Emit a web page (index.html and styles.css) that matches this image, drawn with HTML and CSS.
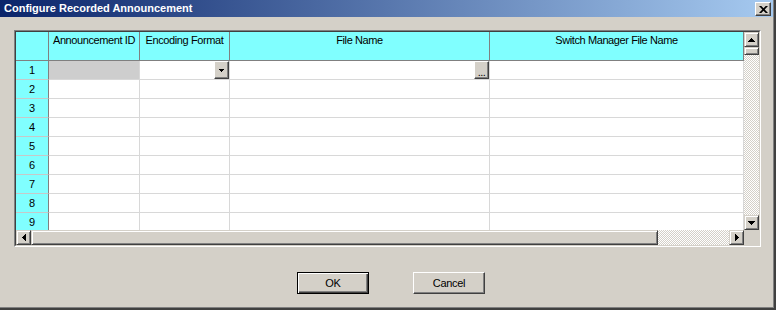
FILE: index.html
```html
<!DOCTYPE html>
<html>
<head>
	<title>Configure Recorded Announcement</title>
	<meta charset="UTF-8">
	<link rel="stylesheet" href="styles.css">
</head>
<body>
	<div class="frame">
		<div class="window">
			<header class="titlebar">
				<span class="title">Configure Recorded Announcement</span>
				<button class="close" type="button">
					<svg width="9" height="7" viewBox="0 0 9 7"><path d="M0 0h2.3l2.2 2.3L6.7 0H9L5.7 3.5 9 7H6.7L4.5 4.7 2.3 7H0l3.3-3.5z"/></svg>
				</button>
			</header>
			<div class="client">
				<div class="grid">
					<div class="grid-inner">
						<div class="viewport">
							<div class="cells">
								<div class="hcell"></div>
								<div class="hcell">Announcement ID</div>
								<div class="hcell">Encoding Format</div>
								<div class="hcell">File Name</div>
								<div class="hcell">Switch Manager File Name</div>

								<div class="rhead">1</div>
								<div class="cell locked"></div>
								<div class="cell"><span class="cell-btn"><svg width="5" height="3" viewBox="0 0 5 3"><path d="M0 0h5v1H4v1H3v1H2V2H1V1H0z"/></svg></span></div>
								<div class="cell"><span class="cell-btn dots">...</span></div>
								<div class="cell"></div>

								<div class="rhead">2</div><div class="cell"></div><div class="cell"></div><div class="cell"></div><div class="cell"></div>
								<div class="rhead">3</div><div class="cell"></div><div class="cell"></div><div class="cell"></div><div class="cell"></div>
								<div class="rhead">4</div><div class="cell"></div><div class="cell"></div><div class="cell"></div><div class="cell"></div>
								<div class="rhead">5</div><div class="cell"></div><div class="cell"></div><div class="cell"></div><div class="cell"></div>
								<div class="rhead">6</div><div class="cell"></div><div class="cell"></div><div class="cell"></div><div class="cell"></div>
								<div class="rhead">7</div><div class="cell"></div><div class="cell"></div><div class="cell"></div><div class="cell"></div>
								<div class="rhead">8</div><div class="cell"></div><div class="cell"></div><div class="cell"></div><div class="cell"></div>
								<div class="rhead">9</div><div class="cell"></div><div class="cell"></div><div class="cell"></div><div class="cell"></div>
							</div>
						</div>
						<div class="vscroll">
							<div class="sb-btn"><svg width="7" height="4" viewBox="0 0 7 4"><path d="M3 0h1v1h1v1h1v1h1v1H0V3h1V2h1V1h1z"/></svg></div>
							<div class="sb-thumb v"></div>
							<div class="sb-track"></div>
							<div class="sb-btn"><svg width="7" height="4" viewBox="0 0 7 4"><path d="M0 0h7v1H6v1H5v1H4v1H3V3H2V2H1V1H0z"/></svg></div>
						</div>
						<div class="hscroll">
							<div class="sb-btn"><svg width="4" height="7" viewBox="0 0 4 7"><path d="M3 0h1v7H3V6H2V5H1V4H0V3h1V2h1V1h1z"/></svg></div>
							<div class="sb-thumb h"></div>
							<div class="sb-track"></div>
							<div class="sb-btn"><svg width="4" height="7" viewBox="0 0 4 7"><path d="M0 0h1v1h1v1h1v1h1v1H3v1H2v1H1v1H0z"/></svg></div>
						</div>
						<div class="sb-corner"></div>
					</div>
				</div>
				<div class="actions">
					<button class="btn default" type="button">OK</button>
					<button class="btn" type="button">Cancel</button>
				</div>
			</div>
		</div>
	</div>
</body>
</html>
```

FILE: styles.css
```css
body {
	margin: 0;
	padding: 0;
	background-color: #d4d0c8;
	font-family: "Liberation Sans", Arial, sans-serif;
	font-size: 11px;
	color: #000;
}
.frame {
	width: 776px;
	height: 310px;
	box-sizing: border-box;
	border-right: 2px solid #404040;
	border-bottom: 2px solid #404040;
}
.window {
	height: 100%;
	box-sizing: border-box;
	border-right: 1px solid #808080;
	border-bottom: 1px solid #808080;
	background-color: #d4d0c8;
}
.titlebar {
	height: 17px;
	display: flex;
	align-items: flex-start;
	justify-content: space-between;
	padding: 0 2px 0 4px;
	background: linear-gradient(to right, #0a246a, #a6caf0);
}
.title {
	color: #fff;
	font-weight: bold;
	line-height: 17px;
}
.close {
	width: 16px;
	height: 14px;
	margin-top: 2px;
	padding: 0;
	display: flex;
	align-items: center;
	justify-content: center;
	background-color: #d4d0c8;
	border: 1px solid;
	border-color: #fff #404040 #404040 #fff;
	box-shadow: inset -1px -1px #808080;
}
.client {
	padding: 13px 0 0 14px;
}

/* sunken grid box */
.grid {
	width: 747px;
	box-sizing: border-box;
	border: 1px solid;
	border-color: #808080 #fff #fff #808080;
}
.grid-inner {
	display: grid;
	grid-template-columns: 728px 15px;
	grid-template-rows: 198px 15px;
	border: 1px solid;
	border-color: #404040 #d4d0c8 #d4d0c8 #404040;
}
.viewport {
	overflow: hidden;
	background-color: #fff;
}
.cells {
	display: grid;
	grid-template-columns: 33px 91px 90px 260px 254px;
	grid-template-rows: 29px;
	grid-auto-rows: 19px;
}
.cells > div {
	box-sizing: border-box;
	border-right: 1px solid #d8d8d8;
	border-bottom: 1px solid #d8d8d8;
}
.cells .hcell {
	background-color: #80ffff;
	border-color: #808080;
	text-align: center;
	line-height: 13px;
	padding-top: 2px;
	letter-spacing: -0.4px;
	white-space: nowrap;
}
.cells .rhead {
	background-color: #80ffff;
	border-right-color: #808080;
	border-bottom-color: #c8c8c8;
	text-align: center;
	line-height: 18px;
}
.cells .locked {
	background-color: #cecece;
}
.cell {
	display: flex;
	justify-content: flex-end;
}
.cell-btn {
	width: 15px;
	height: 18px;
	box-sizing: border-box;
	display: flex;
	align-items: center;
	justify-content: center;
	background-color: #d4d0c8;
	border: 1px solid;
	border-color: #fff #404040 #404040 #fff;
	box-shadow: inset -1px -1px #808080;
}
.cell-btn.dots {
	align-items: flex-end;
	line-height: 12px;
	letter-spacing: -0.5px;
}

/* scrollbars */
.vscroll {
	display: flex;
	flex-direction: column;
}
.hscroll {
	display: flex;
}
.sb-btn,
.sb-thumb {
	flex: none;
	box-sizing: border-box;
	background-color: #d4d0c8;
	border: 1px solid;
	border-color: #d4d0c8 #404040 #404040 #d4d0c8;
	box-shadow: inset 1px 1px #fff, inset -1px -1px #808080;
}
.sb-btn {
	width: 15px;
	height: 15px;
	display: flex;
	align-items: center;
	justify-content: center;
}
.sb-thumb.v {
	height: 8px;
}
.sb-thumb.h {
	width: 627px;
}
.sb-track {
	flex-grow: 1;
	background: repeating-conic-gradient(#d4d0c8 0 25%, #fff 0 50%) 0 0 / 2px 2px;
}
.sb-corner {
	background-color: #d4d0c8;
}

/* dialog buttons */
.actions {
	display: flex;
	gap: 44px;
	margin-top: 25px;
	padding-left: 283px;
}
.btn {
	width: 72px;
	height: 22px;
	padding: 0;
	font-family: inherit;
	font-size: 11px;
	background-color: #d4d0c8;
	border: 1px solid;
	border-color: #fff #404040 #404040 #fff;
	box-shadow: inset -1px -1px #808080;
	letter-spacing: -0.3px;
}
.btn.default {
	border-color: #000;
	box-shadow: inset 1px 1px #fff, inset -1px -1px #404040, inset -2px -2px #808080;
}
```
